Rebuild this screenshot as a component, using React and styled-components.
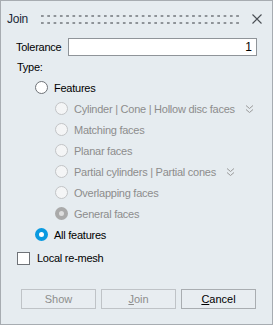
import React from "react";
import styled, { createGlobalStyle } from "styled-components";

const Global = createGlobalStyle`
  html, body {
    margin: 0;
    padding: 0;
    background: #e6ecf0;
  }
  body {
    font-family: "Liberation Sans", Arial, sans-serif;
    font-size: 11px;
    letter-spacing: -0.25px;
    color: #000;
  }
`;

const Window = styled.div`
  box-sizing: border-box;
  width: 273px;
  height: 325px;
  background: #e6ecf0;
  border: 1px solid #a7acb1;
  display: flex;
  flex-direction: column;
  white-space: nowrap;
`;

const TitleBar = styled.div`
  height: 36px;
  display: flex;
  align-items: center;
  padding-left: 6px;
`;

const Title = styled.div`
  color: #1b2a3a;
  font-size: 12px;
  width: 34px;
`;

const Grip = styled.div`
  flex: 1;
  height: 9px;
  margin-top: 1px;
  background-image: radial-gradient(circle at 1px 1px, #8e9398 1.5px, transparent 1.5px);
  background-size: 6.3px 7px;
  margin-right: 12px;
`;

const Close = styled.button`
  width: 11px;
  height: 11px;
  padding: 0;
  margin-right: 10px;
  border: 0;
  background: none;
  display: flex;
  align-items: center;
  justify-content: center;
`;

const Body = styled.div`
  padding: 1px 15px 0 15px;
  display: flex;
  flex-direction: column;
  flex: 1;
`;

const FieldRow = styled.div`
  display: flex;
  align-items: center;
  height: 18px;
`;

const Label = styled.label`
  width: 52px;
`;

const Input = styled.input`
  flex: 1;
  box-sizing: border-box;
  height: 18px;
  border: 1px solid #8f9499;
  background: #fff;
  text-align: right;
  padding: 0 4px;
  font: inherit;
  font-size: 12px;
  outline: none;
`;

const TypeLabel = styled.div`
  height: 16px;
  line-height: 16px;
  margin-top: 3px;
  padding-left: 1px;
`;

const Options = styled.div`
  margin-top: 2px;
  display: flex;
  flex-direction: column;
`;

const OptionRow = styled.div`
  height: 21px;
  display: flex;
  align-items: center;
  padding-left: ${(p) => (p.$sub ? 39 : 19)}px;
  color: ${(p) => (p.$disabled ? "#8d8d8d" : "#000")};
`;

const RadioDot = styled.span`
  box-sizing: border-box;
  width: 13px;
  height: 13px;
  border-radius: 50%;
  margin-right: 6px;
  flex: none;
  border: ${(p) =>
    p.$checked
      ? p.$disabled
        ? "4px solid #aaaaaa"
        : "4px solid #0a9ae0"
      : p.$disabled
      ? "1px solid #c2c4c6"
      : "1px solid #6f7378"};
  background: ${(p) =>
    p.$checked ? (p.$disabled ? "#dedede" : "#fff") : p.$disabled ? "#f4f5f6" : "#fff"};
`;

const Chevron = styled.svg`
  margin-left: 10px;
  flex: none;
`;

const CheckRow = styled.div`
  margin-top: 6px;
  height: 14px;
  display: flex;
  align-items: center;
  padding-left: 1px;
`;

const Box = styled.span`
  box-sizing: border-box;
  width: 13px;
  height: 13px;
  border: 1px solid #6f7378;
  background: #fff;
  margin-right: 7px;
`;

const Buttons = styled.div`
  margin-top: auto;
  margin-bottom: 15px;
  display: flex;
  justify-content: flex-end;
  gap: 5px;
  padding-right: 1px;
`;

const Button = styled.button`
  box-sizing: border-box;
  width: 75px;
  height: 20px;
  padding: 0;
  font: inherit;
  background: #e8edf1;
  border: 1px solid ${(p) => (p.disabled ? "#bfc3c7" : "#a9adb1")};
  color: ${(p) => (p.disabled ? "#8d8d8d" : "#000")};
  border-radius: 0;
  u {
    text-decoration: underline;
  }
`;

const DoubleChevron = () => (
  <Chevron width="9" height="10" viewBox="0 0 9 10" fill="none" stroke="#9a9a9a" strokeWidth="1">
    <path d="M1 1.5 L4.5 4.5 L8 1.5" />
    <path d="M1 5.5 L4.5 8.5 L8 5.5" />
  </Chevron>
);

const Option = ({ label, sub, disabled, checked, more }) => (
  <OptionRow $sub={sub} $disabled={disabled}>
    <RadioDot $checked={checked} $disabled={disabled} />
    <span>{label}</span>
    {more && <DoubleChevron />}
  </OptionRow>
);

export default function App() {
  return (
    <>
      <Global />
      <Window>
        <TitleBar>
          <Title>Join</Title>
          <Grip />
          <Close aria-label="Close">
            <svg width="10" height="10" viewBox="0 0 10 10" stroke="#4a4f55" strokeWidth="1.1">
              <path d="M0.5 0.5 L9.5 9.5 M9.5 0.5 L0.5 9.5" />
            </svg>
          </Close>
        </TitleBar>
        <Body>
          <FieldRow>
            <Label htmlFor="tol">Tolerance</Label>
            <Input id="tol" defaultValue="1" />
          </FieldRow>
          <TypeLabel>Type:</TypeLabel>
          <Options>
            <Option label="Features" />
            <Option sub disabled label="Cylinder | Cone | Hollow disc faces" more />
            <Option sub disabled label="Matching faces" />
            <Option sub disabled label="Planar faces" />
            <Option sub disabled label="Partial cylinders | Partial cones" more />
            <Option sub disabled label="Overlapping faces" />
            <Option sub disabled checked label="General faces" />
            <Option checked label="All features" />
          </Options>
          <CheckRow>
            <Box />
            <span>Local re-mesh</span>
          </CheckRow>
          <Buttons>
            <Button disabled>Show</Button>
            <Button disabled>
              <u>J</u>oin
            </Button>
            <Button>
              <u>C</u>ancel
            </Button>
          </Buttons>
        </Body>
      </Window>
    </>
  );
}
